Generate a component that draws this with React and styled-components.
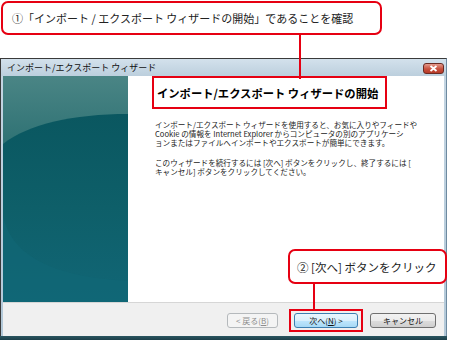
import React from "react";
import styled, { createGlobalStyle } from "styled-components";

const Global = createGlobalStyle`
  html, body { margin: 0; padding: 0; background: #fff; }
  body { font-family: "Noto Sans CJK JP", "Liberation Sans", sans-serif; }
`;

const Page = styled.div`
  position: relative;
  width: 450px;
  height: 340px;
  overflow: hidden;
  background: #fff;
  display: flex;
  flex-direction: column;
`;

const Callout = styled.div`
  box-sizing: border-box;
  border: 2px solid #e60012;
  border-radius: 7px;
  background: #fff;
  color: #222;
  font-size: ${(p) => p.$size || 11}px;
  display: flex;
  align-items: center;
  white-space: nowrap;
`;

const TopCallout = styled(Callout)`
  margin: 1px 0 0 1px;
  width: 381px;
  height: 34px;
  padding-left: 9px;
`;

const BottomCallout = styled(Callout)`
  position: absolute;
  left: 288px;
  top: 249px;
  width: 159px;
  height: 35px;
  padding-left: 7px;
  z-index: 3;
`;

const Connector = styled.div`
  position: absolute;
  width: 2px;
  background: #e60012;
  left: ${(p) => p.$x}px;
  top: ${(p) => p.$y}px;
  height: ${(p) => p.$h}px;
  z-index: 2;
`;

const Window = styled.div`
  margin-top: 23px;
  width: 447px;
  height: 282px;
  box-sizing: border-box;
  border-top: 1px solid #3a3a3a;
  border-left: 1px solid #3a3a3a;
  border-right: 1px solid #6e8aa0;
  background: linear-gradient(#c5d6e3, #b2c8d8);
  display: flex;
  flex-direction: column;
`;

const TitleBar = styled.div`
  height: 17px;
  display: flex;
  align-items: center;
  justify-content: space-between;
  padding: 0 2px 0 6px;
  background: linear-gradient(#d3e1ec, #bccfdd);
  font-size: 9px;
  color: #111;
`;

const CloseButton = styled.div`
  width: 21px;
  height: 11px;
  margin-top: 2px;
  box-sizing: border-box;
  border: 1px solid #6b2a22;
  border-radius: 3px;
  background: linear-gradient(#e49a8c, #c8503d 55%, #b63a28);
  display: flex;
  align-items: center;
  justify-content: center;
`;

const Body = styled.div`
  height: 226px;
  display: flex;
  margin-left: 2px;
  margin-right: 2px;
  background: #fff;
`;

const SidePanel = styled.div`
  width: 125px;
  flex: none;
  background: #11616d;
  svg { display: block; }
`;

const Content = styled.div`
  flex: 1;
  padding-left: 24px;
  display: flex;
  flex-direction: column;
`;

const Heading = styled.div`
  box-sizing: border-box;
  width: 235px;
  height: 33px;
  border: 2px solid #e60012;
  padding-left: 3px;
  display: flex;
  align-items: center;
  font-size: 11.3px;
  font-weight: 700;
  color: #000;
  white-space: nowrap;
`;

const Paragraph = styled.p`
  margin: ${(p) => p.$top || 0}px 0 0 3px;
  font-size: 7.6px;
  line-height: 9px;
  color: #222;
  white-space: nowrap;
`;

const Footer = styled.div`
  flex: 1;
  margin: 0 2px;
  border-top: 1px solid #d6d6d6;
  background: #f0f0f0;
  display: flex;
  align-items: center;
  justify-content: flex-end;
  padding: 2px 8px 0 0;
`;

const BottomEdge = styled.div`
  height: 4px;
  background: linear-gradient(#2a5560, #1c3f49);
  margin: 0 -1px;
`;

const Button = styled.div`
  box-sizing: border-box;
  width: ${(p) => p.$w}px;
  height: 15px;
  border: 1px solid ${(p) => (p.$disabled ? "#b5b9bc" : p.$focus ? "#3c7fb1" : "#707070")};
  border-radius: 3px;
  background: ${(p) =>
    p.$disabled
      ? "#f4f4f4"
      : p.$focus
      ? "linear-gradient(#eaf6fd, #d9f0fc 50%, #bee6fd 51%, #a7d9f5)"
      : "linear-gradient(#f2f2f2, #ebebeb 50%, #dddddd 51%, #cfcfcf)"};
  color: ${(p) => (p.$disabled ? "#8d8d8d" : "#111")};
  font-size: 8px;
  display: flex;
  align-items: center;
  justify-content: center;
  white-space: nowrap;
  u { text-decoration: underline; }
`;

const Highlight = styled.div`
  border: 2px solid #e60012;
  padding: 2px 3px;
  margin: 0 7px 0 11px;
`;

function Side() {
  return (
    <svg width="125" height="226" viewBox="0 0 125 226">
      <defs>
        <linearGradient id="bg" x1="0" y1="0" x2="0" y2="1">
          <stop offset="0" stopColor="#4a8585" />
          <stop offset="0.3" stopColor="#2f7274" />
          <stop offset="1" stopColor="#136b79" />
        </linearGradient>
        <linearGradient id="dk" x1="0" y1="0" x2="0" y2="1">
          <stop offset="0" stopColor="#0a5760" />
          <stop offset="0.5" stopColor="#0e5f69" />
          <stop offset="1" stopColor="#116676" />
        </linearGradient>
      </defs>
      <rect width="125" height="226" fill="url(#bg)" />
      <path d="M0 68 C 25 48, 70 38, 125 38 L125 226 L0 226 Z" fill="url(#dk)" />
      <path d="M0 140 C 8 175, 40 200, 125 205 L125 226 L0 226 Z" fill="#116777" opacity="0.6" />
    </svg>
  );
}

export default function App() {
  return (
    <>
      <Global />
      <Page>
        <TopCallout>①「インポート / エクスポート ウィザードの開始」であることを確認</TopCallout>
        <Connector $x={299} $y={35} $h={44} />
        <Window>
          <TitleBar>
            <span>インポート/エクスポート ウィザード</span>
            <CloseButton>
              <svg width="9" height="7" viewBox="0 0 9 7">
                <path d="M1.5 1 L7.5 6 M7.5 1 L1.5 6" stroke="#fff" strokeWidth="1.8" />
              </svg>
            </CloseButton>
          </TitleBar>
          <Body>
            <SidePanel>
              <Side />
            </SidePanel>
            <Content>
              <Heading>インポート/エクスポート ウィザードの開始</Heading>
              <Paragraph $top={11}>
                インポート/エクスポート ウィザードを使用すると、お気に入りやフィードや
                <br />
                Cookie の情報を Internet Explorer からコンピュータの別のアプリケーシ
                <br />
                ョンまたはファイルへインポートやエクスポートが簡単にできます。
              </Paragraph>
              <Paragraph $top={11}>
                このウィザードを続行するには [次へ] ボタンをクリックし、終了するには [
                <br />
                キャンセル] ボタンをクリックしてください。
              </Paragraph>
            </Content>
          </Body>
          <Footer>
            <Button $w={51} $disabled>
              &lt; 戻る(<u>B</u>)
            </Button>
            <Highlight>
              <Button $w={64} $focus>
                次へ(<u>N</u>) &gt;
              </Button>
            </Highlight>
            <Button $w={66}>キャンセル</Button>
          </Footer>
          <BottomEdge />
        </Window>
        <BottomCallout $size={11.5}>② [次へ] ボタンをクリック</BottomCallout>
        <Connector $x={313} $y={284} $h={26} />
      </Page>
    </>
  );
}
